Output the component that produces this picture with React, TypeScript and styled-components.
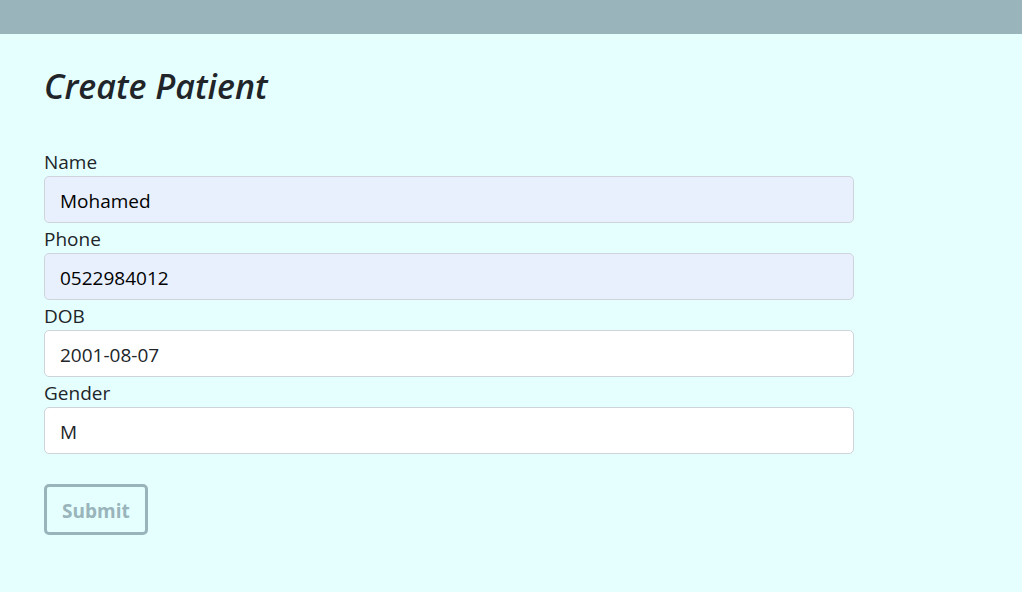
import React from "react";
import styled, { createGlobalStyle } from "styled-components";

const GlobalStyle = createGlobalStyle`
  *, *::before, *::after { box-sizing: border-box; }
  body {
    margin: 0;
    min-height: 100vh;
    background: #e5ffff;
    color: #212529;
    font-family: "Segoe UI", "Open Sans", "Noto Sans", sans-serif;
    font-size: 19px;
    line-height: 28px;
  }
`;

const TopBar = styled.header`
  height: 34px;
  background: #99b4ba;
`;

const Page = styled.main`
  padding: 30px 44px;
`;

const Title = styled.h1`
  margin: 0 0 40px;
  font-size: 34px;
  line-height: 44px;
  font-weight: 600;
  font-style: italic;
`;

const Form = styled.form`
  margin-right: 124px;
`;

const Field = styled.div`
  display: flex;
  flex-direction: column;
  margin-bottom: 2px;
`;

const Label = styled.label`
  line-height: 28px;
`;

const Input = styled.input<{ $filled?: boolean }>`
  width: 100%;
  height: 47px;
  margin: 0;
  padding: 10px 15px 8px;
  border: 1px solid #ced4da;
  border-radius: 5px;
  background: ${(p) => (p.$filled ? "#e8f0fe" : "#ffffff")};
  color: ${(p) => (p.$filled ? "#000000" : "#212529")};
  font-family: inherit;
  font-size: 19px;
`;

const SubmitButton = styled.button`
  margin-top: 28px;
  height: 51px;
  padding: 2px 15px 0;
  border: 3px solid #99b4ba;
  border-radius: 5px;
  background: transparent;
  color: #99b4ba;
  font-family: inherit;
  font-size: 19px;
  font-weight: 700;
`;

const fields = [
  { id: "name", label: "Name", value: "Mohamed", filled: true },
  { id: "phone", label: "Phone", value: "0522984012", filled: true },
  { id: "dob", label: "DOB", value: "2001-08-07", filled: false },
  { id: "gender", label: "Gender", value: "M", filled: false },
];

export default function App() {
  return (
    <>
      <GlobalStyle />
      <TopBar />
      <Page>
        <Title>Create Patient</Title>
        <Form onSubmit={(e) => e.preventDefault()}>
          {fields.map((f) => (
            <Field key={f.id}>
              <Label htmlFor={f.id}>{f.label}</Label>
              <Input id={f.id} name={f.id} type="text" defaultValue={f.value} $filled={f.filled} />
            </Field>
          ))}
          <SubmitButton type="submit">Submit</SubmitButton>
        </Form>
      </Page>
    </>
  );
}
